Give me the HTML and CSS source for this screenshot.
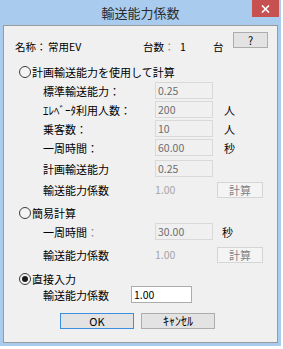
FILE: index.html
```html
<!DOCTYPE html>
<html>
<head>
  <meta charset="UTF-8">
  <title>輸送能力係数</title>
  <link rel="stylesheet" href="styles.css">
</head>
<body>
  <div class="window">
    <div class="titlebar">
      <div class="title">輸送能力係数</div>
      <div class="close">
        <svg width="9" height="8" viewBox="0 0 9 8"><path d="M1 0.5 L8 7.5 M8 0.5 L1 7.5" stroke="#fff" stroke-width="1.6"/></svg>
      </div>
    </div>
    <div class="client">
      <div class="header">
        <span class="hd-text">名称：</span>
        <span class="hd-text">常用EV</span>
        <span class="hd-text">台数<span class="dim">：</span></span>
        <span class="hd-text">1</span>
        <span class="hd-text">台</span>
        <button class="btn help">?</button>
      </div>

      <div class="radio-row first">
        <span class="radio"></span>
        <span>計画輸送能力を使用して計算</span>
      </div>
      <div class="form-row">
        <span class="label">標準輸送能力：</span>
        <span class="field disabled">0.25</span>
        <span class="unit"></span>
      </div>
      <div class="form-row">
        <span class="label">ｴﾚﾍﾞｰﾀ利用人数：</span>
        <span class="field disabled">200</span>
        <span class="unit">人</span>
      </div>
      <div class="form-row">
        <span class="label">乗客数：</span>
        <span class="field disabled">10</span>
        <span class="unit">人</span>
      </div>
      <div class="form-row">
        <span class="label">一周時間：</span>
        <span class="field disabled">60.00</span>
        <span class="unit">秒</span>
      </div>
      <div class="form-row spaced">
        <span class="label">計画輸送能力</span>
        <span class="field disabled">0.25</span>
        <span class="unit"></span>
      </div>
      <div class="form-row spaced">
        <span class="label">輸送能力係数</span>
        <span class="value-off">1.00</span>
        <button class="btn calc">計算</button>
      </div>

      <div class="radio-row second">
        <span class="radio"></span>
        <span>簡易計算</span>
      </div>
      <div class="form-row tall">
        <span class="label">一周時間<span class="dim">：</span></span>
        <span class="field disabled">30.00</span>
        <span class="unit unit-s">秒</span>
      </div>
      <div class="form-row after">
        <span class="label">輸送能力係数</span>
        <span class="value-off">1.00</span>
        <button class="btn calc">計算</button>
      </div>

      <div class="radio-row third">
        <span class="radio checked"></span>
        <span>直接入力</span>
      </div>
      <div class="form-row direct">
        <span class="label">輸送能力係数</span>
        <span class="field active">1.00</span>
      </div>

      <div class="actions">
        <button class="btn ok">OK</button>
        <button class="btn cancel">ｷｬﾝｾﾙ</button>
      </div>
    </div>
  </div>
</body>
</html>
```

FILE: styles.css
```css
body {
  margin: 0;
  background-color: #ffffff;
  font-family: "Noto Sans CJK JP", "Noto Sans", sans-serif;
  font-size: 10.5px;
  color: #000000;
}
.window {
  width: 281px;
  height: 346px;
  box-sizing: border-box;
  background-color: #a9cbee;
  padding: 0 3px 3px 3px;
  display: flex;
  flex-direction: column;
}
.titlebar {
  height: 25px;
  display: flex;
  align-items: flex-start;
  margin-right: -1px;
}
.title {
  flex: 1;
  padding-left: 26px;
  text-align: center;
  font-size: 13px;
  line-height: 25px;
  color: #2b2b2b;
}
.close {
  width: 27px;
  height: 17px;
  background-color: #c75050;
  display: flex;
  align-items: center;
  justify-content: center;
}
.client {
  flex: 1;
  background-color: #f0f0f0;
  border: 1px solid #9b9b9b;
  padding: 6px 9px 0 11px;
  display: flex;
  flex-direction: column;
}
.header {
  display: grid;
  grid-template-columns: 33px 95px 37px 33px 20px 35px;
  height: 22px;
}
.hd-text {
  line-height: 14px;
  margin-top: 8px;
}
.dim {
  color: #8a8a8a;
}
.btn {
  font-family: inherit;
  font-size: 11px;
  padding: 0;
  margin: 0;
  height: 16px;
  line-height: 14px;
  background-color: #e3e3e3;
  border: 1px solid #adadad;
  color: #000000;
}
.help {
  height: 16px;
  line-height: 10px;
}
.radio-row {
  display: flex;
  align-items: center;
  height: 14px;
  margin-left: 4px;
  font-size: 11px;
}
.radio-row.first {
  margin-top: 11px;
}
.radio-row.second {
  margin-top: 8px;
}
.radio-row.third {
  margin-top: 9px;
}
.radio {
  width: 10px;
  height: 10px;
  border: 1px solid #3c3c3c;
  border-radius: 50%;
  background-color: #f4f4f4;
  margin-right: 1px;
  display: flex;
  align-items: center;
  justify-content: center;
}
.radio.checked::after {
  content: "";
  width: 6px;
  height: 6px;
  border-radius: 50%;
  background-color: #1a1a1a;
}
.form-row {
  display: grid;
  grid-template-columns: 112px 58px 50px;
  align-items: center;
  height: 17px;
  margin-top: 2px;
  margin-left: 28px;
}
.radio-row + .form-row {
  margin-top: 3px;
}
.form-row.spaced {
  margin-top: 4px;
}
.form-row.tall {
  margin-top: 3px;
}
.form-row.after {
  margin-top: 6px;
}
.form-row.direct {
  grid-template-columns: 88px 61px;
  margin-top: 0;
}
.label {
  font-size: 11px;
}
.field {
  box-sizing: border-box;
  height: 17px;
  line-height: 15px;
  padding-left: 2px;
  border: 1px solid #d9d9d9;
}
.field.disabled {
  color: #6d6d6d;
  background-color: #f0f0f0;
}
.field.active {
  background-color: #ffffff;
  border-color: #acacac;
  color: #000000;
}
.value-off {
  color: #a5a5a5;
  line-height: 15px;
}
.unit {
  padding-left: 11px;
  font-size: 11px;
}
.unit.unit-s {
  padding-left: 9px;
}
.calc {
  margin-left: 4px;
  width: 46px;
  background-color: #f4f4f4;
  border-color: #d5d5d5;
  color: #838383;
}
.actions {
  display: flex;
  gap: 7px;
  margin-top: 10px;
  margin-left: 45px;
}
.ok,
.cancel {
  width: 74px;
  height: 16px;
}
.cancel {
  font-size: 12px;
}
.ok {
  border-color: #3c8fe0;
}
```
